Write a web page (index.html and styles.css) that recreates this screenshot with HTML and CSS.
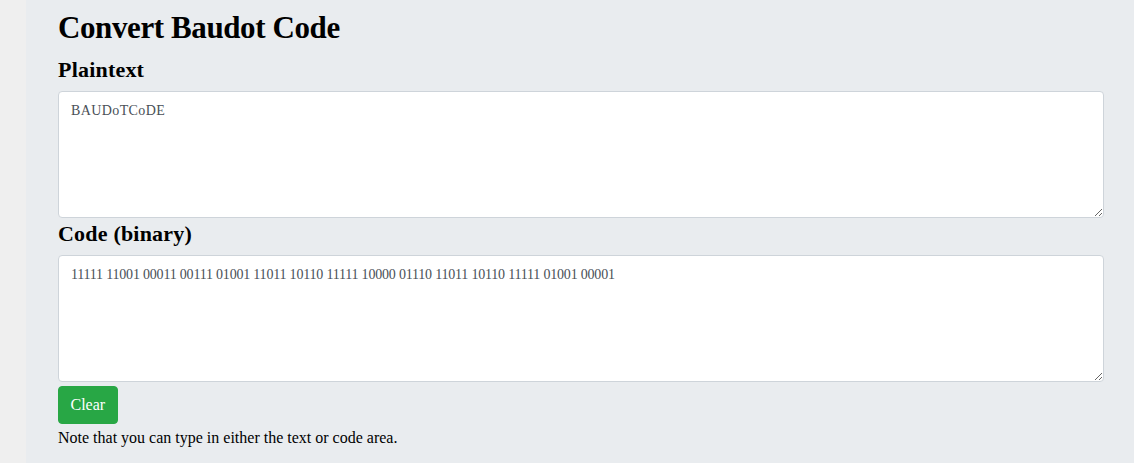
FILE: index.html
```html
<!DOCTYPE html>
<html>
<head>
<meta charset="utf-8">
<link rel="stylesheet" href="styles.css">
</head>
<body>
<div class="page">
  <div class="side"></div>
  <main class="main">
    <h1 class="title">Convert Baudot Code</h1>
    <h2 class="label label-first">Plaintext</h2>
    <textarea class="box">BAUDoTCoDE</textarea>
    <h2 class="label">Code (binary)</h2>
    <textarea class="box box-code">11111 11001 00011 00111 01001 11011 10110 11111 10000 01110 11011 10110 11111 01001 00001</textarea>
    <button class="btn">Clear</button>
    <p class="note">Note that you can type in either the text or code area.</p>
  </main>
</div>
</body>
</html>
```

FILE: styles.css
```css
html, body {
  margin: 0;
  padding: 0;
  height: 100%;
}
body {
  font-family: "Liberation Serif", serif;
  color: #000;
  background: #efefef;
}
.page {
  display: flex;
  height: 463px;
  overflow: hidden;
}
.side {
  width: 26px;
  flex: none;
  background: #efefef;
}
.main {
  flex: 1;
  background: #e9ecef;
  padding: 8px 30px 0 32px;
  display: flex;
  flex-direction: column;
  align-items: flex-start;
}
.title {
  font-size: 31px;
  font-weight: 700;
  margin: 0;
  line-height: 40px;
  letter-spacing: -0.4px;
}
.label {
  font-size: 22px;
  font-weight: 700;
  margin: 1px 0 6px;
  line-height: 30px;
  letter-spacing: 0.2px;
}
.label-first {
  margin-top: 7px;
}
.box {
  box-sizing: border-box;
  width: 100%;
  height: 127px;
  margin: 0;
  padding: 9px 12px 10px;
  border: 1px solid #ced4da;
  border-radius: 4px;
  background: #fff;
  font-family: "Liberation Serif", serif;
  font-size: 14px;
  line-height: 20px;
  color: #495057;
  resize: vertical;
  letter-spacing: 0.4px;
}
.box-code {
  letter-spacing: -0.2px;
}
.btn {
  margin-top: 4px;
  background: #28a745;
  color: #fff;
  border: 1px solid #28a745;
  border-radius: 4px;
  font-family: "Liberation Serif", serif;
  font-size: 16px;
  padding: 8px 11.5px;
  line-height: 20px;
  height: 38px;
}
.note {
  margin: 3px 0 0;
  font-size: 16px;
  line-height: 22px;
}
```
